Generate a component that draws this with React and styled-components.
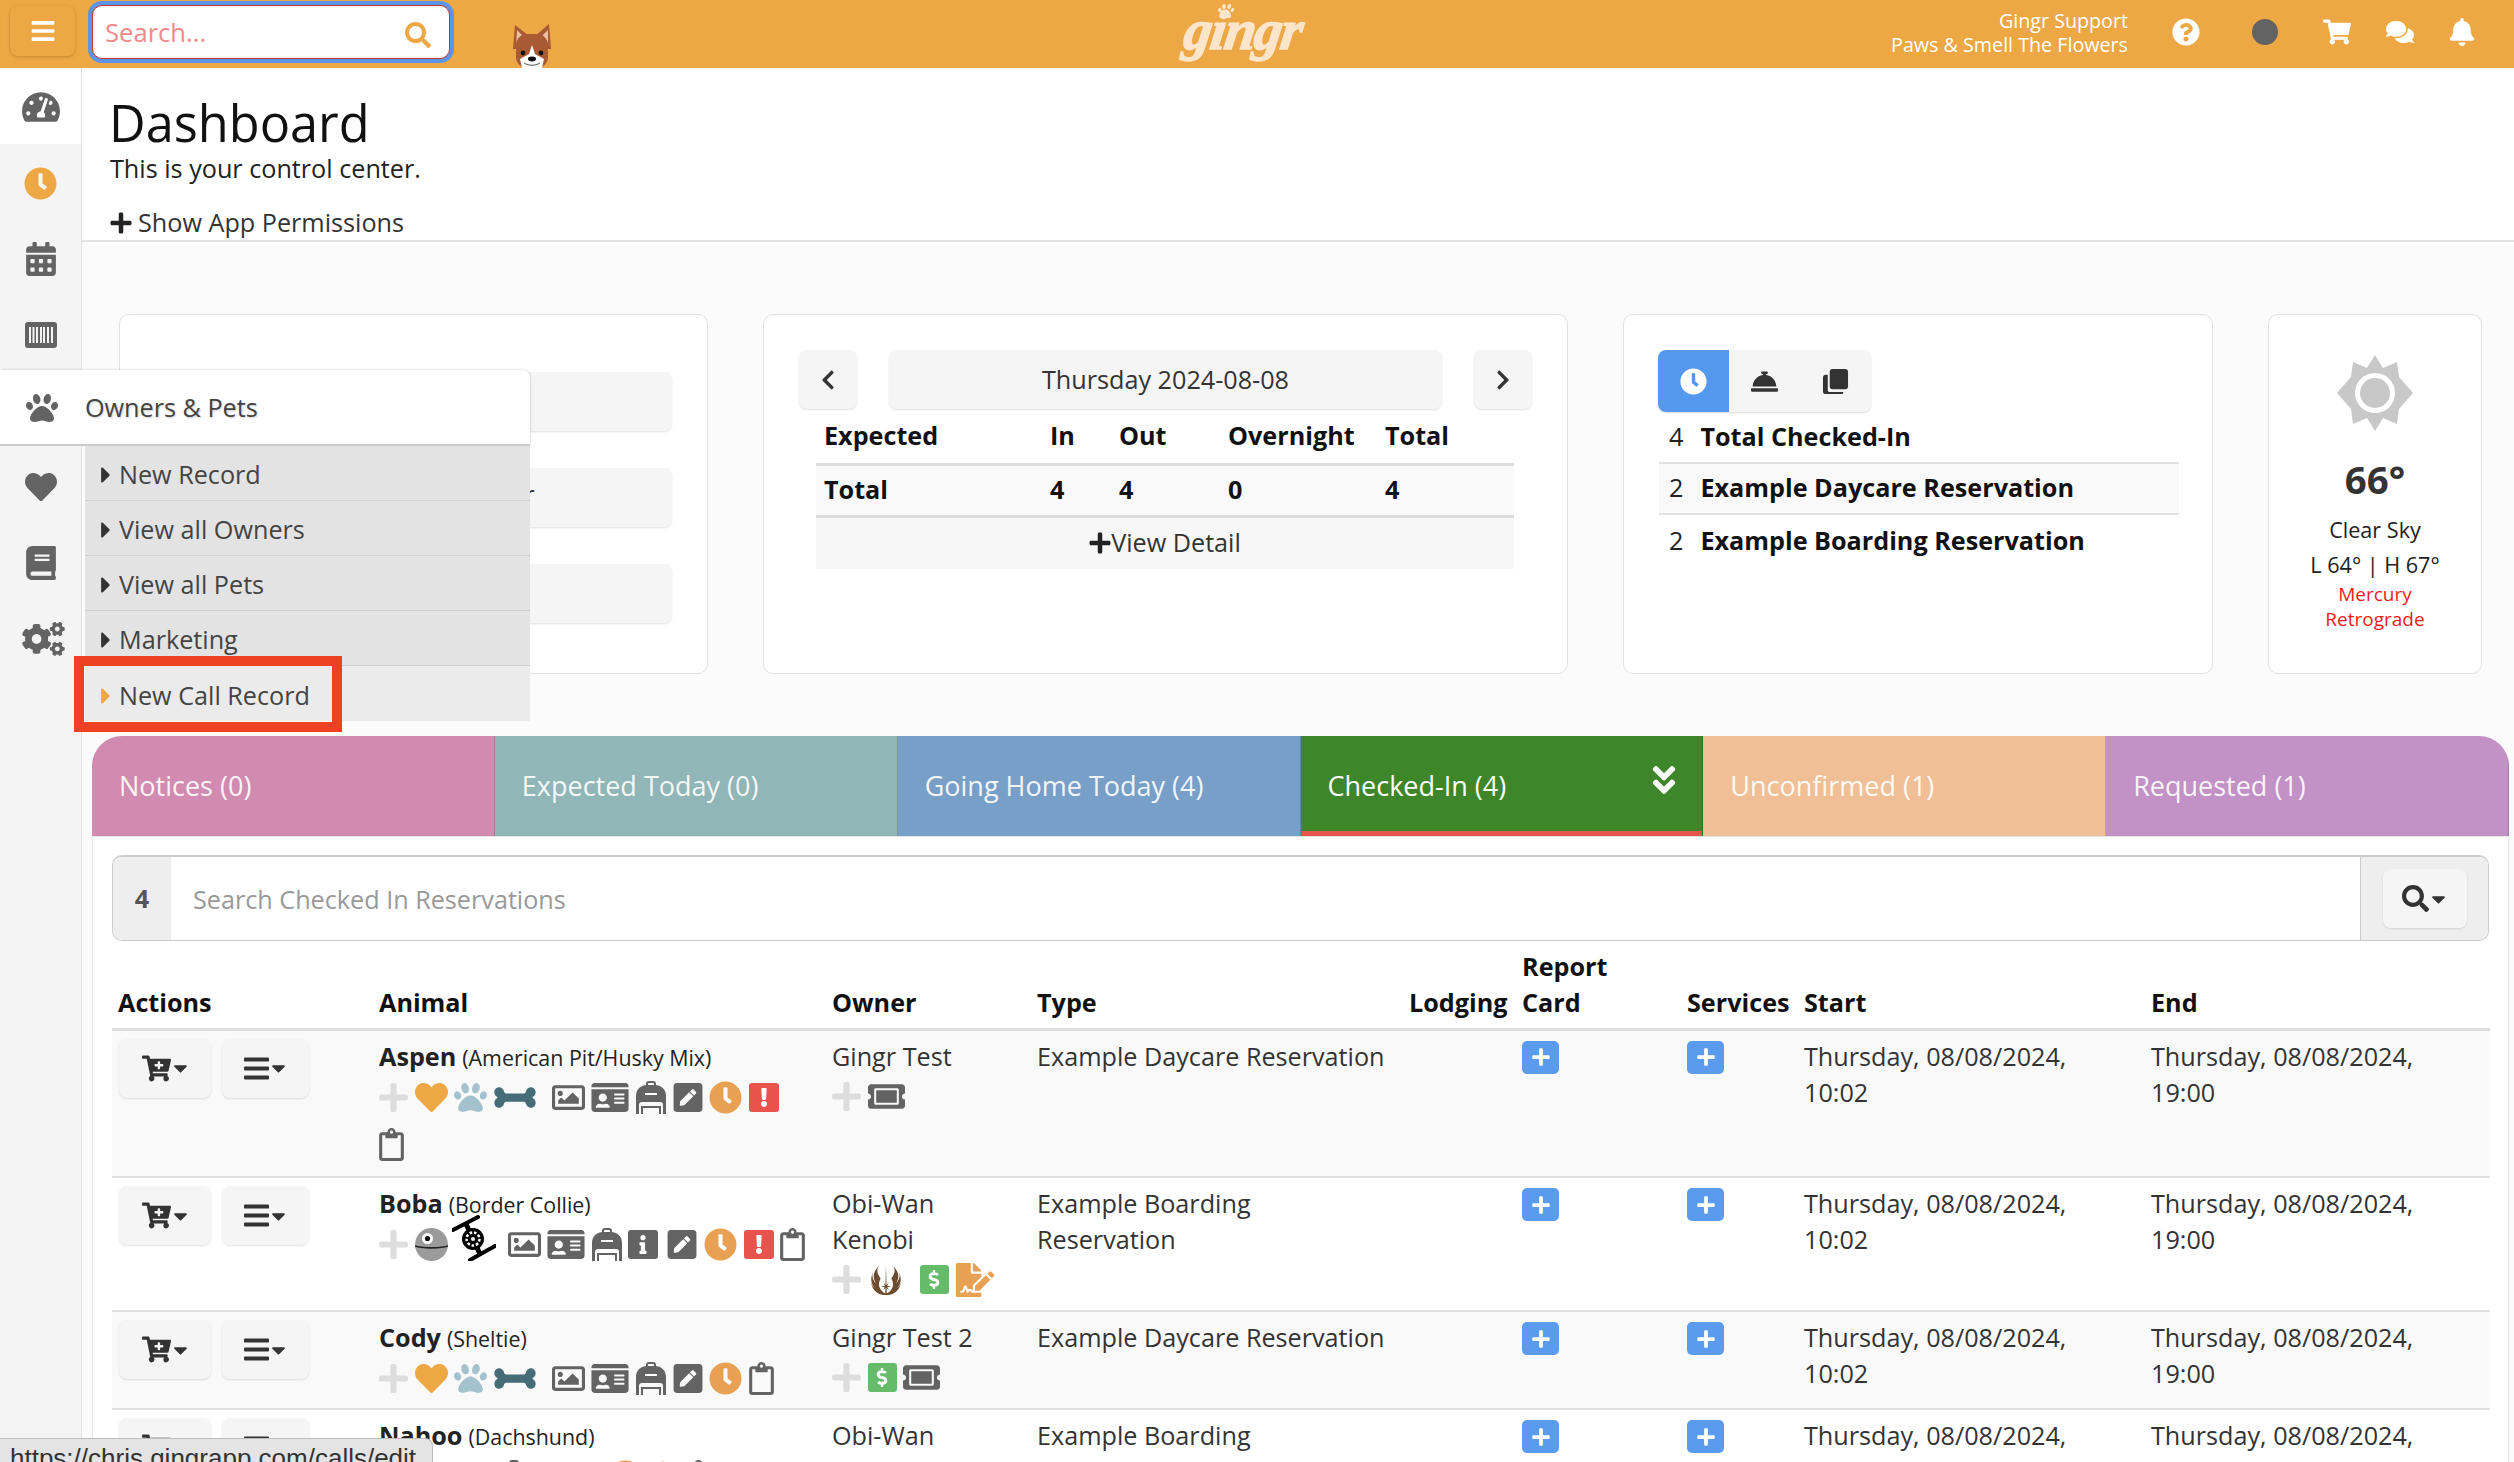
import React from 'react';
import styled, { createGlobalStyle } from 'styled-components';
import {
  FaBars, FaSearch, FaQuestionCircle, FaShoppingCart, FaComments, FaBell, FaTachometerAlt, FaClock,
  FaCalendarAlt, FaPaw, FaHeart, FaBook, FaCogs, FaCaretRight, FaCaretDown, FaPlus, FaChevronLeft,
  FaChevronRight, FaConciergeBell, FaAngleDoubleDown, FaCartPlus, FaBone,
  FaRegImage, FaIdCard, FaPenSquare, FaRegClipboard, FaExclamation, FaInfo, FaDollarSign, FaTicketAlt,
  FaJediOrder, FaFileSignature,
} from 'react-icons/fa';

const GlobalStyle = createGlobalStyle`
  html, body { margin: 0; padding: 0; height: 100%; overflow: hidden; }
  body { font-family: "Open Sans", "Liberation Sans", sans-serif; font-size: 25.2px; line-height: 35.84px; color: #333; background: #fbfbfb; }
  * { box-sizing: border-box; }
`;

const BarcodeIcon = () => (
  <svg viewBox="0 0 32 26" fill="none">
    <rect width="32" height="26" rx="3" fill="currentColor" />
    <path d="M5 5v16M8.5 5v16M12 5v16M16 5v16M19 5v16M23 5v16M27 5v16" stroke="#f4f4f4" strokeWidth="2" />
  </svg>
);

const CopiesIcon = () => (
  <svg viewBox="0 0 28 28">
    <rect x="8" y="1" width="19" height="21" rx="3" fill="currentColor" />
    <path d="M6 7v16a2 2 0 0 0 2 2h14v1a1 1 0 0 1-1 1H4a3 3 0 0 1-3-3V10a3 3 0 0 1 3-3z" fill="currentColor" />
  </svg>
);

const BackpackIcon = () => (
  <svg viewBox="0 0 30 33" fill="none">
    <path d="M11 5V3a2 2 0 0 1 2-2h4a2 2 0 0 1 2 2v2" stroke="currentColor" strokeWidth="2" />
    <path d="M0 33V15C0 8 5 4 11 4h8c6 0 11 4 11 11v18h-3V24a3 3 0 0 0-3-3H6a3 3 0 0 0-3 3v9z" fill="currentColor" />
    <path d="M9 13h12" stroke="#fff" strokeWidth="2" />
    <path d="M6 33v-7h18v7" stroke="currentColor" strokeWidth="2" />
  </svg>
);

const DeathStarIcon = () => (
  <svg viewBox="0 0 33 33">
    <circle cx="16.5" cy="16.5" r="16.5" fill="#9b9b9b" />
    <circle cx="12.5" cy="10.5" r="5.5" fill="#fff" />
    <circle cx="12.5" cy="10.5" r="2.6" fill="#111" />
    <path d="M0 18c6 2.5 27 2.5 33 0" stroke="#222" strokeWidth="1.6" fill="none" />
  </svg>
);

const TieFighterIcon = () => (
  <svg viewBox="0 0 44 46" fill="none">
    <path d="M1 15 26 2M18 45 43 31" stroke="#000" strokeWidth="4" strokeLinecap="round" />
    <path d="M14 9l14 30" stroke="#000" strokeWidth="5" />
    <circle cx="21" cy="24" r="11" fill="#000" />
    <circle cx="21" cy="24" r="6.5" fill="none" stroke="#fff" strokeWidth="2.4" strokeDasharray="2.6 1.8" />
    <circle cx="21" cy="24" r="2" fill="#fff" />
  </svg>
);

const HexBadgeIcon = () => (
  <svg viewBox="0 0 30 30">
    <path d="M15 0 30 7v23H0V7z" fill="#e8534b" />
  </svg>
);

const SunIcon = () => (
  <svg viewBox="0 0 76 76">
    <path d="M38 0l8 13 14-6 2 15 14 16-14 16-2 15-14-6-8 13-8-13-14 6-2-15L0 38l14-16 2-15 14 6z" fill="#c8c8c8" />
    <circle cx="38" cy="38" r="20" fill="#fff" />
    <circle cx="38" cy="38" r="15" fill="#c8c8c8" />
  </svg>
);

const DogIcon = () => (
  <svg viewBox="0 0 38 44">
    <path d="M0 25 2 1l14 11h6L36 0l2 25z" fill="#a85a32" />
    <path d="M3 22 4 6l8 8zM35 22l0-16-8 8z" fill="#ecc0a0" />
    <rect x="3" y="10" width="32" height="34" rx="11" fill="#a85a32" />
    <path d="M19 21l-3 9-9 5 2 9h20l2-9-9-5z" fill="#fff" />
    <circle cx="10" cy="29" r="2.4" fill="#111" />
    <circle cx="28" cy="29" r="2.4" fill="#111" />
    <ellipse cx="19" cy="35" rx="4" ry="2.4" fill="#111" />
    <path d="M11 39c5 3 11 3 16 0" stroke="#555" strokeWidth="1" fill="none" />
  </svg>
);

const Page = styled.div`
  position: relative;
  width: 2514px;
  height: 1462px;
  overflow: hidden;
`;

const TopBar = styled.header`
  display: flex;
  align-items: flex-start;
  height: 68px;
  background: #eda745;
  color: #fff;
`;

const MenuToggle = styled.button`
  display: flex;
  align-items: center;
  justify-content: center;
  width: 65px;
  height: 50px;
  margin: 6px 17px 0 10px;
  border: none;
  border-radius: 8px;
  background: #eda745;
  color: #fff;
  box-shadow: 0 1px 3px rgba(120, 70, 0, 0.35);
  svg { width: 24px; height: 26px; }
`;

const SearchWrap = styled.div`
  position: relative;
  width: 358px;
  height: 54px;
  margin-top: 5px;
  border: 1px solid #c8322c;
  border-radius: 10px;
  background: #fff;
  box-shadow: 0 0 0 4px #5b95ea;
  svg { position: absolute; right: 18px; top: 16px; width: 26px; height: 26px; color: #eda745; }
`;

const SearchInput = styled.input`
  width: 100%;
  height: 100%;
  padding: 0 12px;
  border: none;
  background: none;
  outline: none;
  font: 25.6px "Open Sans", sans-serif;
  &::placeholder { color: #f08a8a; opacity: 1; }
`;

const Dog = styled.div`
  width: 38px;
  height: 44px;
  margin: 24px 0 0 63px;
  svg { display: block; width: 100%; height: 100%; }
`;

const Logo = styled.div`
  position: relative;
  width: 124px;
  margin-left: 634px;
  padding-top: 3px;
  font: italic 700 56px/54px "Liberation Serif", serif;
  letter-spacing: -1.5px;
  color: #fbe5cb;
  -webkit-text-stroke: 1.5px #fbe5cb;
  transform: skewX(-8deg);
  svg { position: absolute; left: 29px; top: 3px; width: 19px; height: 16px; }
`;

const Account = styled.div`
  margin-left: auto;
  padding-top: 9px;
  font-size: 19.7px;
  line-height: 24px;
  text-align: right;
`;

const TopIcons = styled.div`
  display: flex;
  align-items: center;
  height: 64px;
  padding-right: 38px;
`;

const TopIcon = styled.span`
  display: inline-flex;
  justify-content: center;
  width: 28px;
  margin-left: ${(p) => p.$gap}px;
  color: ${(p) => p.$color || '#fff'};
  svg { width: 100%; height: 28px; }
`;

const StatusDot = styled.span`
  display: block;
  width: 26px;
  height: 26px;
  border-radius: 50%;
  background: #636363;
`;

const Layout = styled.div`
  display: flex;
  height: 1394px;
`;

const SideNav = styled.nav`
  position: relative;
  z-index: 2;
  flex: 0 0 82px;
  border-right: 1px solid #e3e3e3;
  background: #f4f4f4;
`;

const NavItem = styled.div`
  position: relative;
  display: flex;
  align-items: center;
  justify-content: center;
  height: 76px;
  padding-top: 2px;
  background: ${(p) => (p.$active ? '#fff' : 'transparent')};
  color: ${(p) => p.$color || '#636363'};
`;

const NavGlyph = styled.span`
  display: inline-flex;
  width: ${(p) => p.$w}px;
  height: ${(p) => p.$h}px;
  margin-left: ${(p) => p.$shift || 0}px;
  svg { width: 100%; height: 100%; }
`;

const Flyout = styled.div`
  position: absolute;
  left: 0;
  top: -2px;
  width: 530px;
`;

const FlyoutHead = styled.div`
  display: flex;
  align-items: center;
  height: 76px;
  padding: 2px 0 0 25px;
  border-bottom: 2px solid #ccc;
  border-radius: 0 8px 0 0;
  background: #fff;
  color: #444;
  text-shadow: 1px 1px 2px rgba(0, 0, 0, 0.2);
  box-shadow: 1px -1px 2px rgba(0, 0, 0, 0.1);
`;

const FlyoutGlyph = styled.span`
  display: inline-flex;
  width: 34px;
  height: 32px;
  margin-right: 26px;
  color: #636363;
  svg { width: 100%; height: 100%; }
`;

const FlyoutList = styled.ul`
  margin: 0 0 0 85px;
  padding: 0;
  list-style: none;
`;

const FlyoutRow = styled.li`
  display: flex;
  align-items: center;
  height: 55px;
  padding: 4px 0 0 15px;
  border-bottom: 1px solid #cfcfcf;
  background: ${(p) => (p.$hot ? '#ebebeb' : '#e3e3e3')};
  color: #444;
  svg { width: 12px; height: 26px; margin-right: 7px; color: ${(p) => (p.$hot ? '#eda745' : '#333')}; }
  &:last-child { border-bottom: none; }
`;

const Callout = styled.div`
  position: absolute;
  left: 74px;
  top: 588px;
  width: 268px;
  height: 76px;
  border: 10px solid #ee4023;
`;

const Main = styled.main`
  flex: 1;
  min-width: 0;
`;

const PageHead = styled.div`
  height: 174px;
  padding: 27px 0 0 28px;
  border-bottom: 2px solid #e2e2e2;
  background: #fff;
`;

const Title = styled.h1`
  margin: 0 0 0 -1px;
  font-size: 50.5px;
  font-weight: 400;
  line-height: 55px;
  color: #111;
`;

const Subtitle = styled.p`
  margin: 0;
  line-height: 36px;
  color: #222;
`;

const PermToggle = styled.div`
  display: flex;
  align-items: center;
  margin-top: 19px;
  color: #333;
  svg { width: 22px; height: 24px; margin-right: 6px; color: #222; }
`;

const Content = styled.div`
  padding: 0 5px 0 10px;
`;

const CardGrid = styled.div`
  display: grid;
  grid-template-columns: 589px 805px 590px 214px;
  column-gap: 55px;
  height: 360px;
  margin: 72px 0 62px 27px;
`;

const Card = styled.section`
  padding: 35px 35px 0;
  border: 1px solid #e2e2e2;
  border-radius: 10px;
  background: #fff;
`;

const SoftButton = styled.div`
  display: flex;
  align-items: center;
  justify-content: center;
  height: 59px;
  border-radius: 8px;
  background: #f5f5f5;
  box-shadow: 0 1px 2px rgba(0, 0, 0, 0.12);
  color: #333;
`;

const QuickButton = styled(SoftButton)`
  padding: 0 6px 6px 0;
`;

const QuickStack = styled.div`
  display: grid;
  row-gap: 37px;
  padding-top: 22px;
`;

const DatePager = styled.div`
  display: grid;
  grid-template-columns: 58px 1fr 58px;
  column-gap: 32px;
  svg { width: 16px; height: 22px; }
`;

const StatsTable = styled.table`
  width: 698px;
  margin: 0 0 0 17px;
  border-collapse: collapse;
  table-layout: fixed;
  font-weight: 700;
  color: #111;
  th { height: 55px; padding: 0 7px 0 8px; text-align: left; font-weight: 700; border-bottom: 3px solid #ddd; }
  td { height: 52px; padding: 0 7px 0 8px; background: #f9f9f9; border-bottom: 3px solid #ddd; }
`;

const ColW = styled.col`
  width: ${(p) => p.$w}px;
`;

const DetailRow = styled.div`
  display: flex;
  align-items: center;
  justify-content: center;
  width: 698px;
  height: 51px;
  margin-left: 17px;
  background: #f7f7f7;
  svg { width: 22px; height: 24px; color: #222; }
`;

const ToggleGroup = styled.div`
  display: inline-flex;
  height: 62px;
  margin-left: -1px;
  border-radius: 8px;
  overflow: hidden;
  background: #f5f5f5;
  box-shadow: 0 1px 2px rgba(0, 0, 0, 0.15);
`;

const ToggleItem = styled.span`
  display: flex;
  align-items: center;
  justify-content: center;
  width: 71px;
  background: ${(p) => (p.$on ? '#5599ee' : 'transparent')};
  color: ${(p) => (p.$on ? '#fff' : '#333')};
  svg { width: 27px; height: 27px; }
`;

const CountRow = styled.div`
  display: flex;
  align-items: center;
  width: 520px;
  height: 51.5px;
  padding-left: 10px;
  border-bottom: ${(p) => (p.$line ? '2px solid #e2e2e2' : 'none')};
  background: ${(p) => (p.$shade ? '#f9f9f9' : 'transparent')};
  color: #222;
  b { margin-left: 17px; font-weight: 700; color: #111; }
`;

const WeatherCard = styled.section`
  padding-top: 40px;
  border: 1px solid #e2e2e2;
  border-radius: 10px;
  background: #fff;
  text-align: center;
`;

const SunWrap = styled.div`
  width: 76px;
  height: 76px;
  margin: 0 auto;
  svg { width: 100%; height: 100%; display: block; }
`;

const Temp = styled.div`
  margin-top: 26px;
  font-size: 38.4px;
  font-weight: 700;
  line-height: 44px;
  color: #333;
`;

const Sky = styled.div`
  margin-top: ${(p) => p.$gap}px;
  font-size: 21.6px;
  line-height: 34px;
  color: #222;
`;

const Alert = styled.div`
  margin-top: 0;
  font-size: 19px;
  line-height: 25px;
  color: #ec1c1c;
`;

const TabBar = styled.div`
  display: grid;
  grid-template-columns: repeat(6, 1fr);
  width: 2417px;
  height: 100px;
  border-radius: 30px 30px 0 0;
  overflow: hidden;
`;

const Tab = styled.div`
  position: relative;
  display: flex;
  align-items: center;
  padding-left: 27px;
  border-right: 1px solid rgba(0, 0, 0, 0.15);
  box-shadow: ${(p) => (p.$active ? 'inset 0 -5px 0 #e8534b' : 'none')};
  background: ${(p) => p.$bg};
  font-size: 27px;
  color: ${(p) => (p.$active ? '#fff' : 'rgba(255,255,255,0.92)')};
  svg { position: absolute; right: 24px; top: 26px; width: 28px; height: 36px; color: #fff; }
`;

const Panel = styled.div`
  width: 2417px;
  height: 700px;
  padding: 18px 19px 0 19px;
  border: 1px solid #e6e6e6;
  border-radius: 0 0 10px 10px;
  background: #fff;
`;

const SearchGroup = styled.div`
  display: flex;
  align-items: stretch;
  height: 86px;
  border: 1px solid #ccc;
  border-top-width: 2px;
  border-radius: 10px;
  overflow: hidden;
`;

const CountAddon = styled.div`
  display: flex;
  align-items: center;
  justify-content: center;
  flex: 0 0 58px;
  background: #eee;
  font-weight: 700;
  color: #555;
`;

const FilterInput = styled.input`
  flex: 1;
  padding: 0 22px;
  border: none;
  outline: none;
  font: 25.2px "Open Sans", sans-serif;
  &::placeholder { color: #999; opacity: 1; }
`;

const SearchAddon = styled.div`
  display: flex;
  align-items: center;
  justify-content: center;
  flex: 0 0 128px;
  border-left: 1px solid #ccc;
  background: #eee;
`;

const ActionButton = styled(SoftButton)`
  width: ${(p) => p.$w}px;
  gap: 1px;
  svg:first-child { width: ${(p) => p.$icon || 29}px; height: 29px; }
  svg:last-child { width: 17px; height: 22px; }
`;

const Grid = styled.table`
  width: 2378px;
  margin-top: 8px;
  border-collapse: collapse;
  table-layout: fixed;
  th {
    padding: 0 6px 7px;
    border-bottom: 3px solid #ddd;
    text-align: left;
    vertical-align: bottom;
    white-space: pre-line;
    font-weight: 700;
    color: #111;
  }
  td { padding: 8px 6px 0; vertical-align: top; }
`;

const Row = styled.tr`
  height: ${(p) => p.$h}px;
  background: ${(p) => (p.$odd ? '#f9f9f9' : '#fff')};
  border-bottom: 2px solid #e2e2e2;
`;

const Actions = styled.div`
  display: flex;
  column-gap: 11px;
  padding-left: 1px;
`;

const PetName = styled.div`
  color: #222;
  b { font-weight: 700; }
  small { margin-left: 6px; font-size: 21.4px; }
`;

const OwnerName = styled.div`
  max-width: 170px;
`;

const TypeName = styled.div`
  max-width: 350px;
`;

const IconRow = styled.div`
  display: flex;
  flex-wrap: wrap;
  align-items: flex-start;
  max-width: 436px;
  min-height: 33px;
  margin-top: 5px;
  row-gap: 14px;
`;

const Glyph = styled.span`
  display: inline-flex;
  align-items: center;
  justify-content: center;
  width: ${(p) => p.$w}px;
  height: ${(p) => p.$h || 33}px;
  margin-top: ${(p) => p.$top || 0}px;
  margin-right: ${(p) => p.$after ?? 6.6}px;
  color: ${(p) => p.$c || '#636363'};
  svg { width: 100%; height: 100%; display: block; }
`;

const Square = styled.span`
  display: inline-flex;
  align-items: center;
  justify-content: center;
  width: ${(p) => p.$w || 30}px;
  height: 29px;
  margin-top: 2px;
  margin-right: ${(p) => p.$after ?? 6.6}px;
  border-radius: 3px;
  background: ${(p) => p.$bg};
  color: #fff;
  svg { width: 16px; height: 19px; }
`;

const BlueAdd = styled.span`
  display: flex;
  align-items: center;
  justify-content: center;
  width: 37px;
  height: 33px;
  margin-top: 2px;
  border-radius: 5px;
  background: #5b9bee;
  color: #fff;
  svg { width: 18px; height: 20px; }
`;

const StatusBar = styled.div`
  position: absolute;
  z-index: 3;
  left: 0;
  bottom: 0;
  width: 433px;
  height: 24px;
  padding-left: 10px;
  border: 1px solid #bdbdbd;
  border-left: none;
  border-bottom: none;
  border-radius: 0 8px 0 0;
  overflow: hidden;
  background: #e4e4e4;
  font: 26px/38px "Liberation Sans", sans-serif;
  white-space: nowrap;
  color: #333;
`;

const plus = <Glyph $w={29} $c="#ddd" key="plus"><FaPlus /></Glyph>;
const heart = <Glyph $w={33} $c="#eda745" key="heart"><FaHeart /></Glyph>;
const paw = <Glyph $w={33} $c="#a4c2ce" key="paw"><FaPaw /></Glyph>;
const bone = <Glyph $w={42} $c="#466c78" $after={16} key="bone"><FaBone /></Glyph>;
const image = <Glyph $w={33} key="image"><FaRegImage /></Glyph>;
const idCard = <Glyph $w={38} key="id"><FaIdCard /></Glyph>;
const backpack = <Glyph $w={30} key="pack"><BackpackIcon /></Glyph>;
const pencil = <Glyph $w={30} key="pencil"><FaPenSquare /></Glyph>;
const clock = <Glyph $w={33} $c="#e8a052" key="clock"><FaClock /></Glyph>;
const alert = <Square $bg="#e8534b" key="alert"><FaExclamation /></Square>;
const info = <Square $bg="#636363" $after={9} key="info"><FaInfo /></Square>;
const clipboard = <Glyph $w={25} key="clip"><FaRegClipboard /></Glyph>;
const dollar = <Square $bg="#66bb6a" $w={29} key="dollar"><FaDollarSign /></Square>;
const ticket = <Glyph $w={37} key="ticket"><FaTicketAlt /></Glyph>;
const jedi = <Glyph $w={36} $h={34} $after={16} $c="#6b4c2e" key="jedi"><FaJediOrder /></Glyph>;
const signature = <Glyph $w={40} $h={34} $c="#e8a052" key="sig"><FaFileSignature /></Glyph>;
const deathStar = <Glyph $w={33} $after={4} key="star"><DeathStarIcon /></Glyph>;
const tie = <Glyph $w={44} $h={46} $top={-13} $after={12} key="tie"><TieFighterIcon /></Glyph>;
const hex = <Glyph $w={30} $after={8} key="hex"><HexBadgeIcon /></Glyph>;

const rows = [
  {
    name: 'Aspen', breed: '(American Pit/Husky Mix)', owner: 'Gingr Test', type: 'Example Daycare Reservation', h: 148,
    petIcons: [plus, heart, paw, bone, image, idCard, backpack, pencil, clock, alert, clipboard],
    ownerIcons: [plus, ticket],
  },
  {
    name: 'Boba', breed: '(Border Collie)', owner: 'Obi-Wan Kenobi', type: 'Example Boarding Reservation', h: 134,
    petIcons: [plus, deathStar, tie, image, idCard, backpack, info, pencil, clock, alert, clipboard],
    ownerIcons: [plus, jedi, dollar, signature],
  },
  {
    name: 'Cody', breed: '(Sheltie)', owner: 'Gingr Test 2', type: 'Example Daycare Reservation', h: 98,
    petIcons: [plus, heart, paw, bone, image, idCard, backpack, pencil, clock, clipboard],
    ownerIcons: [plus, dollar, ticket],
  },
  {
    name: 'Nahoo', breed: '(Dachshund)', owner: 'Obi-Wan Kenobi', type: 'Example Boarding Reservation', h: 130,
    petIcons: [plus, heart, idCard, backpack, pencil, pencil, clock, hex, clipboard],
    ownerIcons: [plus, jedi],
  },
];

const columns = [
  ['Actions', 261], ['Animal', 453], ['Owner', 205], ['Type', 372], ['Lodging', 113],
  ['Report\nCard', 165], ['Services', 117], ['Start', 347], ['End', 345],
];

const menuLinks = ['New Record', 'View all Owners', 'View all Pets', 'Marketing', 'New Call Record'];

const tabs = [
  ['Notices (0)', '#d28bb0'], ['Expected Today (0)', '#90b6b8'], ['Going Home Today (4)', '#789fc8'],
  ['Checked-In (4)', '#3d862a'], ['Unconfirmed (1)', '#f0bf95'], ['Requested (1)', '#c291c6'],
];

const App = () => (
  <Page>
    <GlobalStyle />
    <TopBar>
      <MenuToggle><FaBars /></MenuToggle>
      <SearchWrap>
        <SearchInput placeholder="Search..." />
        <FaSearch />
      </SearchWrap>
      <Dog><DogIcon /></Dog>
      <Logo>
        gingr
        <FaPaw />
      </Logo>
      <Account>
        <div>Gingr Support</div>
        <div>Paws &amp; Smell The Flowers</div>
      </Account>
      <TopIcons>
        <TopIcon $gap={44}><FaQuestionCircle /></TopIcon>
        <TopIcon $gap={51}><StatusDot /></TopIcon>
        <TopIcon $gap={44}><FaShoppingCart /></TopIcon>
        <TopIcon $gap={35}><FaComments /></TopIcon>
        <TopIcon $gap={34}><FaBell /></TopIcon>
      </TopIcons>
    </TopBar>

    <Layout>
      <SideNav>
        <NavItem $active><NavGlyph $w={38} $h={34}><FaTachometerAlt /></NavGlyph></NavItem>
        <NavItem $color="#eda745"><NavGlyph $w={33} $h={33}><FaClock /></NavGlyph></NavItem>
        <NavItem><NavGlyph $w={30} $h={34}><FaCalendarAlt /></NavGlyph></NavItem>
        <NavItem><NavGlyph $w={32} $h={26}><BarcodeIcon /></NavGlyph></NavItem>
        <NavItem>
          <Flyout>
            <FlyoutHead>
              <FlyoutGlyph><FaPaw /></FlyoutGlyph>
              Owners &amp; Pets
            </FlyoutHead>
            <FlyoutList>
              {menuLinks.map((label, i) => (
                <FlyoutRow key={label} $hot={i === menuLinks.length - 1}>
                  <FaCaretRight />
                  {label}
                </FlyoutRow>
              ))}
            </FlyoutList>
          </Flyout>
        </NavItem>
        <NavItem><NavGlyph $w={34} $h={32}><FaHeart /></NavGlyph></NavItem>
        <NavItem><NavGlyph $w={30} $h={34}><FaBook /></NavGlyph></NavItem>
        <NavItem><NavGlyph $w={43} $h={34} $shift={6}><FaCogs /></NavGlyph></NavItem>
        <Callout />
      </SideNav>

      <Main>
        <PageHead>
          <Title>Dashboard</Title>
          <Subtitle>This is your control center.</Subtitle>
          <PermToggle><FaPlus />Show App Permissions</PermToggle>
        </PageHead>

        <Content>
          <CardGrid>
            <Card>
              <QuickStack>
                <QuickButton>Calendar</QuickButton>
                <QuickButton>Add a New Customer</QuickButton>
                <QuickButton>Check In</QuickButton>
              </QuickStack>
            </Card>

            <Card>
              <DatePager>
                <SoftButton><FaChevronLeft /></SoftButton>
                <SoftButton>Thursday 2024-08-08</SoftButton>
                <SoftButton><FaChevronRight /></SoftButton>
              </DatePager>
              <StatsTable>
                <colgroup>
                  <ColW $w={226} /><ColW $w={69} /><ColW $w={109} /><ColW $w={157} /><ColW $w={137} />
                </colgroup>
                <thead>
                  <tr><th>Expected</th><th>In</th><th>Out</th><th>Overnight</th><th>Total</th></tr>
                </thead>
                <tbody>
                  <tr><td>Total</td><td>4</td><td>4</td><td>0</td><td>4</td></tr>
                </tbody>
              </StatsTable>
              <DetailRow><FaPlus />View Detail</DetailRow>
            </Card>

            <Card>
              <ToggleGroup>
                <ToggleItem $on><FaClock /></ToggleItem>
                <ToggleItem><FaConciergeBell /></ToggleItem>
                <ToggleItem><CopiesIcon /></ToggleItem>
              </ToggleGroup>
              <CountRow $line>4<b>Total Checked-In</b></CountRow>
              <CountRow $line $shade>2<b>Example Daycare Reservation</b></CountRow>
              <CountRow>2<b>Example Boarding Reservation</b></CountRow>
            </Card>

            <WeatherCard>
              <SunWrap><SunIcon /></SunWrap>
              <Temp>66°</Temp>
              <Sky $gap={12}>Clear Sky</Sky>
              <Sky $gap={1}>L 64° | H 67°</Sky>
              <Alert>Mercury<br />Retrograde</Alert>
            </WeatherCard>
          </CardGrid>

          <TabBar>
            {tabs.map(([label, bg]) => {
              const active = label.startsWith('Checked');
              return (
                <Tab key={label} $bg={bg} $active={active}>
                  {label}
                  {active && <FaAngleDoubleDown />}
                </Tab>
              );
            })}
          </TabBar>

          <Panel>
            <SearchGroup>
              <CountAddon>4</CountAddon>
              <FilterInput placeholder="Search Checked In Reservations" />
              <SearchAddon>
                <ActionButton $w={84} $icon={27}><FaSearch /><FaCaretDown /></ActionButton>
              </SearchAddon>
            </SearchGroup>

            <Grid>
              <colgroup>
                {columns.map(([label, w]) => <ColW key={label} $w={w} />)}
              </colgroup>
              <thead>
                <tr>{columns.map(([label]) => <th key={label}>{label}</th>)}</tr>
              </thead>
              <tbody>
                {rows.map((row, i) => (
                  <Row key={row.name} $h={row.h} $odd={i % 2 === 0}>
                    <td>
                      <Actions>
                        <ActionButton $w={92}><FaCartPlus /><FaCaretDown /></ActionButton>
                        <ActionButton $w={87} $icon={25}><FaBars /><FaCaretDown /></ActionButton>
                      </Actions>
                    </td>
                    <td>
                      <PetName><b>{row.name}</b><small>{row.breed}</small></PetName>
                      <IconRow>{row.petIcons}</IconRow>
                    </td>
                    <td>
                      <OwnerName>{row.owner}</OwnerName>
                      <IconRow>{row.ownerIcons}</IconRow>
                    </td>
                    <td><TypeName>{row.type}</TypeName></td>
                    <td />
                    <td><BlueAdd><FaPlus /></BlueAdd></td>
                    <td><BlueAdd><FaPlus /></BlueAdd></td>
                    <td>Thursday, 08/08/2024,<br />10:02</td>
                    <td>Thursday, 08/08/2024,<br />19:00</td>
                  </Row>
                ))}
              </tbody>
            </Grid>
          </Panel>
        </Content>
      </Main>
    </Layout>

    <StatusBar>https://chris.gingrapp.com/calls/edit</StatusBar>
  </Page>
);

export default App;
